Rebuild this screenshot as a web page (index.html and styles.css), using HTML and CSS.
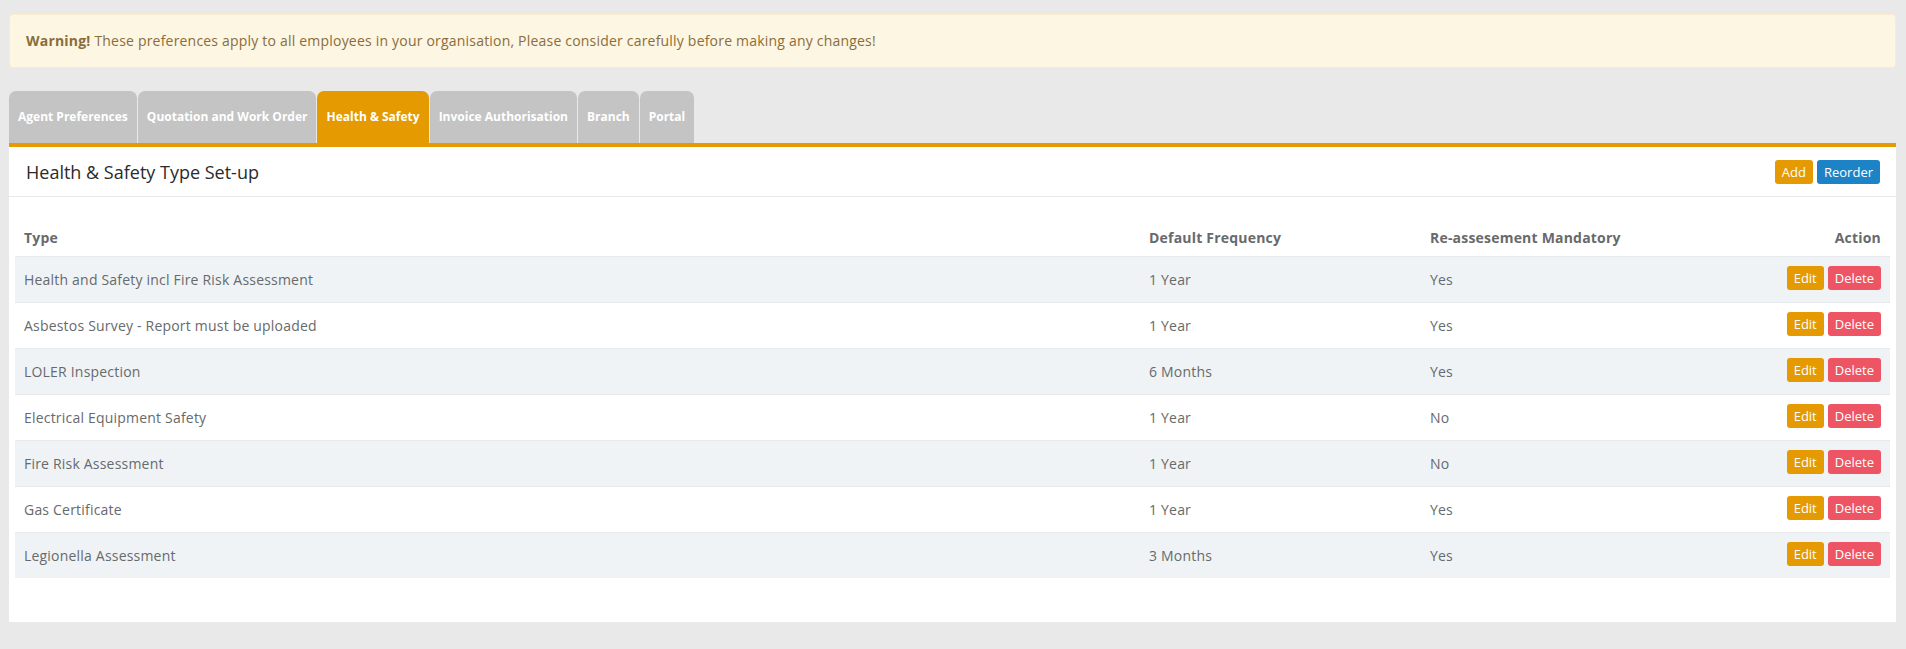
FILE: index.html
```html
<!DOCTYPE html>
<html>
<head>
  <title>Preferences</title>
  <link rel="stylesheet" href="styles.css">
</head>
<body>
  <div class="page">
    <div class="alert">
      <strong>Warning!</strong> These preferences apply to all employees in your organisation, Please consider carefully before making any changes!
    </div>

    <div class="tabs">
      <div class="tab">Agent Preferences</div>
      <div class="tab">Quotation and Work Order</div>
      <div class="tab active">Health &amp; Safety</div>
      <div class="tab">Invoice Authorisation</div>
      <div class="tab">Branch</div>
      <div class="tab">Portal</div>
    </div>

    <div class="panel">
      <div class="panel-title">
        <h5>Health &amp; Safety Type Set-up</h5>
        <div class="btns">
          <span class="btn orange">Add</span>
          <span class="btn blue">Reorder</span>
        </div>
      </div>
      <div class="panel-body">
        <table class="grid">
          <colgroup>
            <col class="c-type">
            <col class="c-freq">
            <col class="c-mand">
            <col>
          </colgroup>
          <thead>
            <tr>
              <th>Type</th>
              <th>Default Frequency</th>
              <th>Re-assesement Mandatory</th>
              <th class="right">Action</th>
            </tr>
          </thead>
          <tbody>
            <tr>
              <td>Health and Safety incl Fire Risk Assessment</td><td>1 Year</td><td>Yes</td>
              <td class="actions"><div class="btns"><span class="btn orange">Edit</span><span class="btn red">Delete</span></div></td>
            </tr>
            <tr>
              <td>Asbestos Survey - Report must be uploaded</td><td>1 Year</td><td>Yes</td>
              <td class="actions"><div class="btns"><span class="btn orange">Edit</span><span class="btn red">Delete</span></div></td>
            </tr>
            <tr>
              <td>LOLER Inspection</td><td>6 Months</td><td>Yes</td>
              <td class="actions"><div class="btns"><span class="btn orange">Edit</span><span class="btn red">Delete</span></div></td>
            </tr>
            <tr>
              <td>Electrical Equipment Safety</td><td>1 Year</td><td>No</td>
              <td class="actions"><div class="btns"><span class="btn orange">Edit</span><span class="btn red">Delete</span></div></td>
            </tr>
            <tr>
              <td>Fire Risk Assessment</td><td>1 Year</td><td>No</td>
              <td class="actions"><div class="btns"><span class="btn orange">Edit</span><span class="btn red">Delete</span></div></td>
            </tr>
            <tr>
              <td>Gas Certificate</td><td>1 Year</td><td>Yes</td>
              <td class="actions"><div class="btns"><span class="btn orange">Edit</span><span class="btn red">Delete</span></div></td>
            </tr>
            <tr>
              <td>Legionella Assessment</td><td>3 Months</td><td>Yes</td>
              <td class="actions"><div class="btns"><span class="btn orange">Edit</span><span class="btn red">Delete</span></div></td>
            </tr>
          </tbody>
        </table>
      </div>
    </div>
  </div>
</body>
</html>
```

FILE: styles.css
```css
body {
  margin: 0;
  background-color: #e9e9e9;
  font-family: "Open Sans", "Liberation Sans", sans-serif;
  font-size: 14px;
  letter-spacing: 0.2px;
  color: #676a6c;
}
.page {
  padding: 14px 10px 0 9px;
}
.alert {
  background-color: #fdf6e2;
  border: 1px solid #faebcc;
  border-radius: 4px;
  color: #8a6d3b;
  padding: 16px;
  line-height: 20px;
}
.tabs {
  display: flex;
  gap: 1px;
  margin-top: 23px;
}
.tab {
  height: 52px;
  line-height: 52px;
  padding: 0 9px;
  background-color: #c4c4c4;
  color: #fff;
  font-size: 12px;
  font-weight: 700;
  letter-spacing: 0;
  border-radius: 7px 7px 0 0;
}
.tab.active {
  background-color: #e49a00;
}
.panel {
  background-color: #fff;
  border-top: 4px solid #e49a00;
}
.panel-title {
  display: flex;
  justify-content: space-between;
  align-items: center;
  height: 49px;
  padding: 0 16px 0 17px;
  border-bottom: 1px solid #e7eaec;
}
.panel-title h5 {
  margin: 0;
  font-size: 18px;
  font-weight: 400;
  letter-spacing: 0;
  color: #2b2b2b;
}
.btns {
  display: flex;
  gap: 4px;
  justify-content: flex-end;
}
.btn {
  display: inline-block;
  padding: 3px 7px;
  line-height: 18px;
  font-size: 13px;
  letter-spacing: 0;
  color: #fff;
  border-radius: 3px;
}
.orange {
  background-color: #e49a00;
}
.blue {
  background-color: #1c84c6;
}
.red {
  background-color: #ed5565;
}
.panel-body {
  padding: 20px 6px 44px;
}
.grid {
  width: 100%;
  border-collapse: collapse;
  table-layout: fixed;
}
.c-type {
  width: 1125px;
}
.c-freq {
  width: 281px;
}
.c-mand {
  width: 300px;
}
.grid th {
  text-align: left;
  font-weight: 700;
  padding: 11px 9px 8px;
  line-height: 20px;
  border-bottom: 1px solid #e7eaec;
}
.grid th.right {
  text-align: right;
}
.grid td {
  padding: 13px 9px 12px;
  line-height: 20px;
  border-bottom: 1px solid #e7eaec;
}
.grid tbody tr:nth-child(odd) {
  background-color: #eff3f6;
}
.grid tbody tr:last-child td {
  border-bottom: none;
}
.grid td.actions {
  padding: 9px 9px 12px;
  vertical-align: top;
}
```
